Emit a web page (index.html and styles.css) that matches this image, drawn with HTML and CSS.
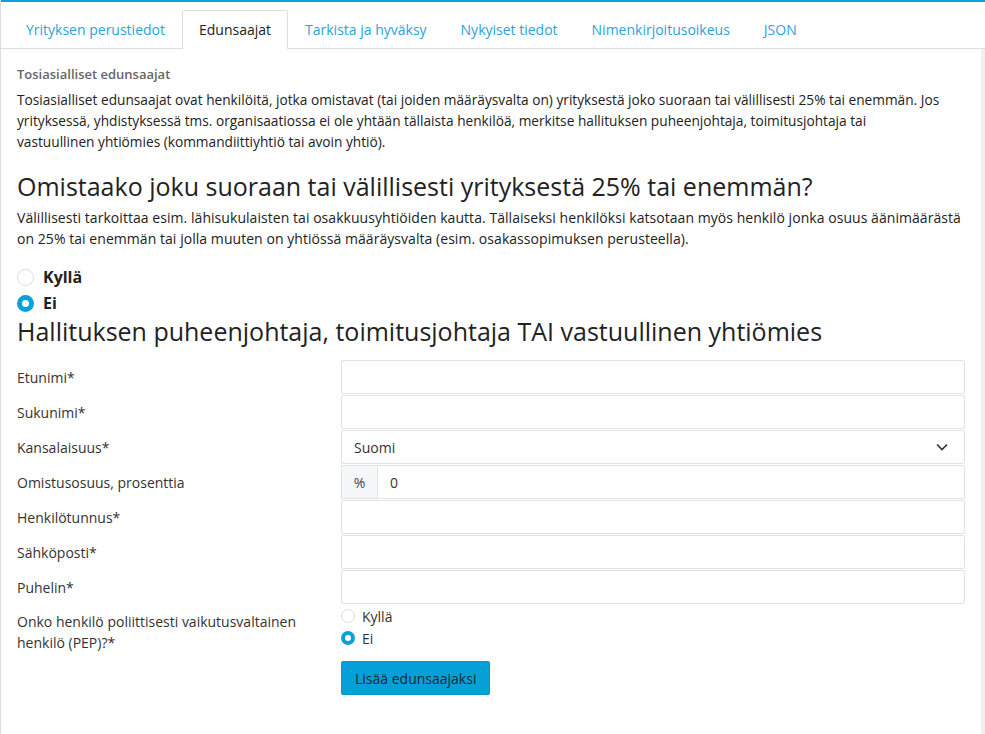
FILE: index.html
```html
<!DOCTYPE html>
<html lang="fi">
<head>
    <meta charset="UTF-8">
    <meta name="viewport" content="width=device-width, initial-scale=1.0">
    <title>Edunsaajat</title>
    <link rel="stylesheet" href="styles.css">
</head>
<body>
    <div class="topbar"></div>
    <ul class="tabs">
        <li class="tab">Yrityksen perustiedot</li>
        <li class="tab active">Edunsaajat</li>
        <li class="tab">Tarkista ja hyväksy</li>
        <li class="tab">Nykyiset tiedot</li>
        <li class="tab">Nimenkirjoitusoikeus</li>
        <li class="tab">JSON</li>
    </ul>
    <div class="main">
        <div class="panel">
            <div class="subtitle">Tosiasialliset edunsaajat</div>
            <p class="text">Tosiasialliset edunsaajat ovat henkilöitä, jotka omistavat (tai joiden määräysvalta on) yrityksestä joko suoraan tai välillisesti 25% tai enemmän. Jos yrityksessä, yhdistyksessä tms. organisaatiossa ei ole yhtään tällaista henkilöä, merkitse hallituksen puheenjohtaja, toimitusjohtaja tai<br>vastuullinen yhtiömies (kommandiittiyhtiö tai avoin yhtiö).</p>

            <h2 class="heading first">Omistaako joku suoraan tai välillisesti yrityksestä 25% tai enemmän?</h2>
            <p class="text help">Välillisesti tarkoittaa esim. lähisukulaisten tai osakkuusyhtiöiden kautta. Tällaiseksi henkilöksi katsotaan myös henkilö jonka osuus äänimäärästä on 25% tai enemmän tai jolla muuten on yhtiössä määräysvalta (esim. osakassopimuksen perusteella).</p>

            <div class="choices">
                <label class="choice"><input type="radio" name="owner"> Kyllä</label>
                <label class="choice"><input type="radio" name="owner" checked> Ei</label>
            </div>

            <h2 class="heading">Hallituksen puheenjohtaja, toimitusjohtaja TAI vastuullinen yhtiömies</h2>

            <div class="form">
                <label class="label">Etunimi*</label>
                <input class="field" type="text">

                <label class="label">Sukunimi*</label>
                <input class="field" type="text">

                <label class="label">Kansalaisuus*</label>
                <div class="field select">
                    <span>Suomi</span>
                    <svg width="12" height="8" viewBox="0 0 12 8"><path d="M1 1.5 L6 6.5 L11 1.5" fill="none" stroke="#333" stroke-width="1.6"/></svg>
                </div>

                <label class="label">Omistusosuus, prosenttia</label>
                <div class="group">
                    <span class="addon">%</span>
                    <input class="field grow" type="text" value="0">
                </div>

                <label class="label">Henkilötunnus*</label>
                <input class="field" type="text">

                <label class="label">Sähköposti*</label>
                <input class="field" type="text">

                <label class="label">Puhelin*</label>
                <input class="field" type="text">

                <label class="label pep">Onko henkilö poliittisesti vaikutusvaltainen henkilö (PEP)?*</label>
                <div class="pep-box">
                    <label class="small-choice"><input type="radio" name="pep"> Kyllä</label>
                    <label class="small-choice"><input type="radio" name="pep" checked> Ei</label>
                    <button class="btn">Lisää edunsaajaksi</button>
                </div>
            </div>
        </div>
        <div class="gutter"></div>
    </div>
</body>
</html>
```

FILE: styles.css
```css
body {
    margin: 0;
    font-family: "Open Sans", "Liberation Sans", sans-serif;
    color: #222;
    background: #fff;
    border-left: 1px solid #ddd;
    min-height: 734px;
    box-sizing: border-box;
}
.topbar {
    height: 2px;
    background: #0aa0d8;
}
.tabs {
    list-style: none;
    margin: 0;
    padding: 8px 0 0 8px;
    display: flex;
    border-bottom: 1px solid #ddd;
}
.tab {
    padding: 0 16px;
    height: 37px;
    line-height: 37px;
    font-size: 14px;
    color: #2aa3dc;
    border: 1px solid transparent;
    border-bottom: none;
    margin-bottom: -1px;
    border-radius: 2px 2px 0 0;
}
.tab.active {
    color: #222;
    background: #fff;
    border-color: #ddd;
    height: 38px;
}
.main {
    display: flex;
}
.panel {
    flex: 1;
    padding: 16px 16px 0 16px;
}
.gutter {
    width: 4px;
    background: #f0f0f0;
    min-height: 685px;
}
.subtitle {
    font-size: 13px;
    font-weight: 600;
    color: #666;
    line-height: 18px;
}
.text {
    font-size: 13.7px;
    line-height: 21px;
    margin: 6px 0 0 0;
}
.text.help {
    font-size: 14px;
    letter-spacing: 0.05px;
}
.heading {
    font-size: 25px;
    font-weight: 400;
    line-height: 30px;
    margin: 0;
}
.heading.first {
    margin-top: 19px;
}
.choices {
    margin-top: 15px;
    display: flex;
    flex-direction: column;
}
.choice {
    font-size: 16px;
    font-weight: 700;
    height: 26px;
    display: flex;
    align-items: center;
    gap: 9px;
}
input[type="radio"] {
    appearance: none;
    margin: 0;
    width: 16px;
    height: 16px;
    border-radius: 50%;
    border: 1px solid #ddd;
    background: #fff;
    box-sizing: border-box;
}
.choice input[type="radio"] {
    width: 17px;
    height: 17px;
}
input[type="radio"]:checked {
    border: 5px solid #0aa0d8;
}
.form {
    display: grid;
    grid-template-columns: 324px 1fr;
    row-gap: 1px;
    margin-top: 14px;
}
.label {
    font-size: 14px;
    color: #333;
    display: flex;
    align-items: center;
}
.field {
    height: 34px;
    box-sizing: border-box;
    border: 1px solid #dfe2e6;
    border-radius: 2px;
    padding: 0 12px;
    font-family: inherit;
    font-size: 14px;
    color: #333;
    background: #fff;
}
.select {
    display: flex;
    align-items: center;
    justify-content: space-between;
    padding-right: 16px;
}
.group {
    display: flex;
}
.addon {
    width: 36px;
    height: 34px;
    box-sizing: border-box;
    border: 1px solid #dfe2e6;
    border-right: none;
    background: #f6f7f9;
    font-size: 14px;
    color: #444;
    display: flex;
    align-items: center;
    justify-content: center;
}
.grow {
    flex: 1;
    border-radius: 0 2px 2px 0;
}
.label.pep {
    align-items: flex-start;
    line-height: 21px;
    padding-top: 6px;
    padding-right: 20px;
}
.pep-box {
    display: flex;
    flex-direction: column;
    align-items: flex-start;
}
.small-choice {
    font-size: 14px;
    height: 22px;
    display: flex;
    align-items: center;
    gap: 7px;
    color: #333;
}
.small-choice input[type="radio"] {
    width: 14px;
    height: 14px;
}
.small-choice input[type="radio"]:checked {
    border-width: 4px;
}
.btn {
    margin-top: 12px;
    height: 34px;
    padding: 0 13px;
    background: #05a0d8;
    border: 1px solid #0398cd;
    border-radius: 2px;
    font-family: inherit;
    font-size: 14px;
    color: #1d2a33;
    cursor: pointer;
}
```
